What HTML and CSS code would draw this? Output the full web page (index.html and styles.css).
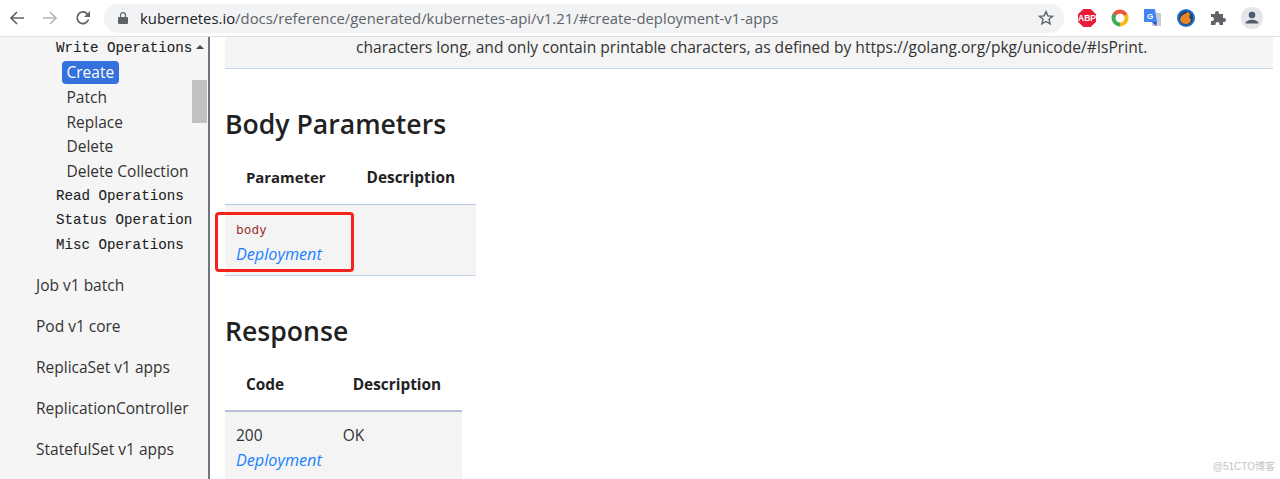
FILE: index.html
```html
<!DOCTYPE html>
<html lang="en">
<head>
    <meta charset="UTF-8">
    <title>Create Deployment</title>
    <link rel="stylesheet" href="styles.css">
</head>
<body>
    <div class="toolbar">
        <svg class="nav-icon" width="16" height="16" viewBox="0 0 16 16"><path d="M15 8H2.5M8 2 2 8l6 6" fill="none" stroke="#5f6368" stroke-width="1.7"/></svg>
        <svg class="nav-icon" width="16" height="16" viewBox="0 0 16 16"><path d="M1 8h12.5M8 2l6 6-6 6" fill="none" stroke="#b4b6b9" stroke-width="1.7"/></svg>
        <svg class="nav-icon" width="16" height="16" viewBox="0 0 16 16"><path d="M13.5 9.5A5.8 5.8 0 1 1 12.2 3.8L14 5.6" fill="none" stroke="#5f6368" stroke-width="1.7"/><path d="M15 1v6H9z" fill="#5f6368"/></svg>
        <div class="omnibox">
            <svg width="10" height="12" viewBox="0 0 10 12"><path d="M1 5h8a1 1 0 0 1 1 1v5a1 1 0 0 1-1 1H1a1 1 0 0 1-1-1V6a1 1 0 0 1 1-1z" fill="#5f6368"/><path d="M2.5 5V3.2a2.5 2.5 0 0 1 5 0V5" fill="none" stroke="#5f6368" stroke-width="1.2"/></svg>
            <span class="url"><span class="host">kubernetes.io</span>/docs/reference/generated/kubernetes-api/v1.21/#create-deployment-v1-apps</span>
            <svg class="star" width="16" height="16" viewBox="0 0 16 16"><path d="M8 1.6l1.9 4.3 4.6.4-3.5 3 1.1 4.6L8 11.5l-4.1 2.4L5 9.3l-3.5-3 4.6-.4z" fill="none" stroke="#5f6368" stroke-width="1.4"/></svg>
        </div>
        <div class="extensions">
            <svg width="18" height="18" viewBox="0 0 18 18"><path d="M5.3 0h7.4L18 5.3v7.4L12.7 18H5.3L0 12.7V5.3z" fill="#ea1c3a"/><text x="9" y="12" class="abp">ABP</text></svg>
            <svg width="18" height="18" viewBox="0 0 18 18"><circle cx="9" cy="9" r="6.5" fill="none" stroke="#e8553c" stroke-width="4" stroke-dasharray="14 27" transform="rotate(-150 9 9)"/><circle cx="9" cy="9" r="6.5" fill="none" stroke="#f6bb18" stroke-width="4" stroke-dasharray="14 27" transform="rotate(-30 9 9)"/><circle cx="9" cy="9" r="6.5" fill="none" stroke="#43a853" stroke-width="4" stroke-dasharray="13.500 27.500" transform="rotate(90 9 9)"/></svg>
            <svg width="18" height="18" viewBox="0 0 18 18"><path d="M7 4h10v13H8z" fill="#c9cdd1"/><path d="M0 0h11l2 13H0z" fill="#4285f4"/><path d="M8 13h5l-1 4z" fill="#2a56c6"/><text x="6" y="9.500" class="gt">G</text></svg>
            <svg width="18" height="18" viewBox="0 0 18 18"><circle cx="9" cy="9" r="9" fill="#1a6fd0"/><circle cx="9" cy="9" r="7" fill="#33415a"/><path d="M3 11c0-3 2-5 5-6l3-2 2 2-1 3 2 3c-1 3-3 4-5 4s-5-1-6-4z" fill="#e8872a"/></svg>
            <svg width="16" height="16" viewBox="0 0 16 16"><path d="M1 4h4V3a2 2 0 0 1 4 0v1h4v4h1a2 2 0 0 1 0 4h-1v3H9.500v-1a2 2 0 0 0-4 0v1H1v-4h1a2 2 0 0 0 0-4H1z" fill="#5f6368"/></svg>
            <svg width="22" height="22" viewBox="0 0 22 22"><circle cx="11" cy="11" r="11" fill="#e3e5e8"/><circle cx="11" cy="8" r="3.300" fill="#4f5b6e"/><path d="M4.500 16.500c0-2.500 4-3.700 6.500-3.700s6.500 1.200 6.500 3.700z" fill="#4f5b6e"/></svg>
        </div>
    </div>

    <div class="page">
        <div class="sidebar">
            <div class="thumb"></div>
            <div class="op-head first-head">Write Operations<span class="caret"></span></div>
            <div class="op-item"><span class="active">Create</span></div>
            <div class="op-item">Patch</div>
            <div class="op-item">Replace</div>
            <div class="op-item">Delete</div>
            <div class="op-item">Delete Collection</div>
            <div class="op-head">Read Operations</div>
            <div class="op-head">Status Operation</div>
            <div class="op-head">Misc Operations</div>
            <ul class="res-list">
                <li>Job v1 batch</li>
                <li>Pod v1 core</li>
                <li>ReplicaSet v1 apps</li>
                <li>ReplicationController</li>
                <li>StatefulSet v1 apps</li>
            </ul>
        </div>

        <div class="content">
            <div class="note">characters long, and only contain printable characters, as defined by https://golang.org/pkg/unicode/#IsPrint.</div>

            <h2 class="first">Body Parameters</h2>
            <table class="body-table">
                <tr><th class="c1">Parameter</th><th>Description</th></tr>
                <tr>
                    <td>
                        <code>body</code><br>
                        <a href="#">Deployment</a>
                    </td>
                    <td></td>
                </tr>
            </table>
            <div class="redbox"></div>

            <h2>Response</h2>
            <table class="resp-table">
                <tr><th class="c1">Code</th><th>Description</th></tr>
                <tr>
                    <td>200<br><a href="#">Deployment</a></td>
                    <td>OK</td>
                </tr>
            </table>
        </div>
    </div>

    <div class="watermark">@51CTO博客</div>
</body>
</html>
```

FILE: styles.css
```css
body {
    margin: 0;
    height: 479px;
    overflow: hidden;
    background: #fff;
    color: #222;
    font-family: "Open Sans", "Noto Sans", sans-serif;
    position: relative;
}
.toolbar {
    height: 37px;
    box-sizing: border-box;
    display: flex;
    align-items: center;
    padding: 0 16px 0 9px;
    border-bottom: 1px solid #dfe1e4;
    background: #fff;
}
.nav-icon {
    margin-right: 17px;
}
.nav-icon:nth-child(3) {
    margin-right: 13px;
}
.omnibox {
    width: 960px;
    height: 29px;
    border-radius: 15px;
    background: #f1f3f4;
    display: flex;
    align-items: center;
    padding: 0 10px 0 14px;
    box-sizing: border-box;
}
.url {
    margin-left: 12px;
    font-size: 14.85px;
    color: #5f6368;
    white-space: nowrap;
    flex: 1;
}
.host {
    color: #202124;
}
.extensions {
    display: flex;
    align-items: center;
    gap: 15px;
    margin-left: 14px;
}
.abp {
    font: bold 8.5px "Liberation Sans", sans-serif;
    fill: #fff;
    text-anchor: middle;
}
.gt {
    font: bold 8px "Liberation Sans", sans-serif;
    fill: #fff;
    text-anchor: middle;
}
.page {
    display: flex;
    height: 442px;
}
.sidebar {
    width: 152px;
    flex-shrink: 0;
    background: #f5f5f5;
    border-right: 2px solid #6d7580;
    position: relative;
    padding-left: 56px;
}
.thumb {
    position: absolute;
    right: 1px;
    top: 43px;
    width: 15px;
    height: 43px;
    background: #c1c1c1;
}
.op-head {
    height: 24.6px;
    line-height: 22px;
    font-family: "Liberation Mono", monospace;
    font-size: 14.2px;
    color: #222;
    white-space: nowrap;
    -webkit-text-stroke: 0.1px #222;
}
.first-head {
    height: 23.6px;
}
.op-item + .op-head {
    margin-top: 1.5px;
}
.caret {
    display: inline-block;
    margin-left: 4px;
    vertical-align: 3px;
    border-left: 4px solid transparent;
    border-right: 4px solid transparent;
    border-bottom: 4px solid #444;
}
.op-item {
    height: 24.5px;
    display: flex;
    align-items: center;
    font-size: 15.5px;
    color: #333;
    padding-left: 10.5px;
    white-space: nowrap;
}
.active {
    background: #3571dc;
    color: #fff;
    border-radius: 4px;
    line-height: 23px;
    padding: 0 5px;
    margin-left: -5px;
}
.res-list {
    list-style: none;
    margin: 15px 0 0 -20px;
    padding: 0;
}
.res-list li {
    height: 41px;
    line-height: 24px;
    font-size: 15.5px;
    color: #333;
    white-space: nowrap;
}
.content {
    flex: 1;
    padding: 0 7px 0 15px;
    position: relative;
}
.note {
    height: 31px;
    line-height: 20px;
    background: #f4f4f4;
    border-bottom: 1px solid #c5d5e8;
    font-size: 15.58px;
    color: #333;
    padding-left: 131px;
    white-space: nowrap;
}
h2 {
    font-size: 26.6px;
    font-weight: 600;
    line-height: 40px;
    margin: 0 0 7px;
    color: #222;
}
h2.first {
    margin-top: 35px;
}
table {
    border-collapse: collapse;
    font-size: 15.5px;
}
th {
    font-size: 15.4px;
    font-weight: 700;
    text-align: left;
    height: 53px;
    padding: 0 21px;
    box-sizing: border-box;
    border-bottom: 1px solid #b6c8e0;
    color: #222;
}
td {
    background: #f4f4f4;
    color: #333;
    padding: 11px 10px 8px 11px;
    line-height: 25px;
    vertical-align: top;
}
.body-table {
    border-bottom: 1px solid #c5d5e8;
    margin-bottom: 35px;
}
.body-table th.c1 {
    font-size: 14.9px;
    padding-right: 20px;
}
.body-table td {
    height: 71px;
    box-sizing: border-box;
}
.resp-table th {
    padding-top: 1px;
    border-bottom: 2px solid #b6bfd6;
}
code {
    font-family: "DejaVu Sans Mono", monospace;
    font-size: 12.8px;
    color: #a03030;
}
a {
    font-style: italic;
    font-size: 16.2px;
    color: #1a80ff;
    text-decoration: none;
}
.redbox {
    position: absolute;
    left: 5px;
    top: 175px;
    width: 133px;
    height: 54px;
    border: 3px solid #f4231c;
    border-radius: 4px;
}
.watermark {
    position: absolute;
    right: 5px;
    bottom: 6px;
    font-family: "Liberation Sans", "Noto Sans CJK SC", sans-serif;
    font-size: 10px;
    color: #c4c4c4;
}
```
